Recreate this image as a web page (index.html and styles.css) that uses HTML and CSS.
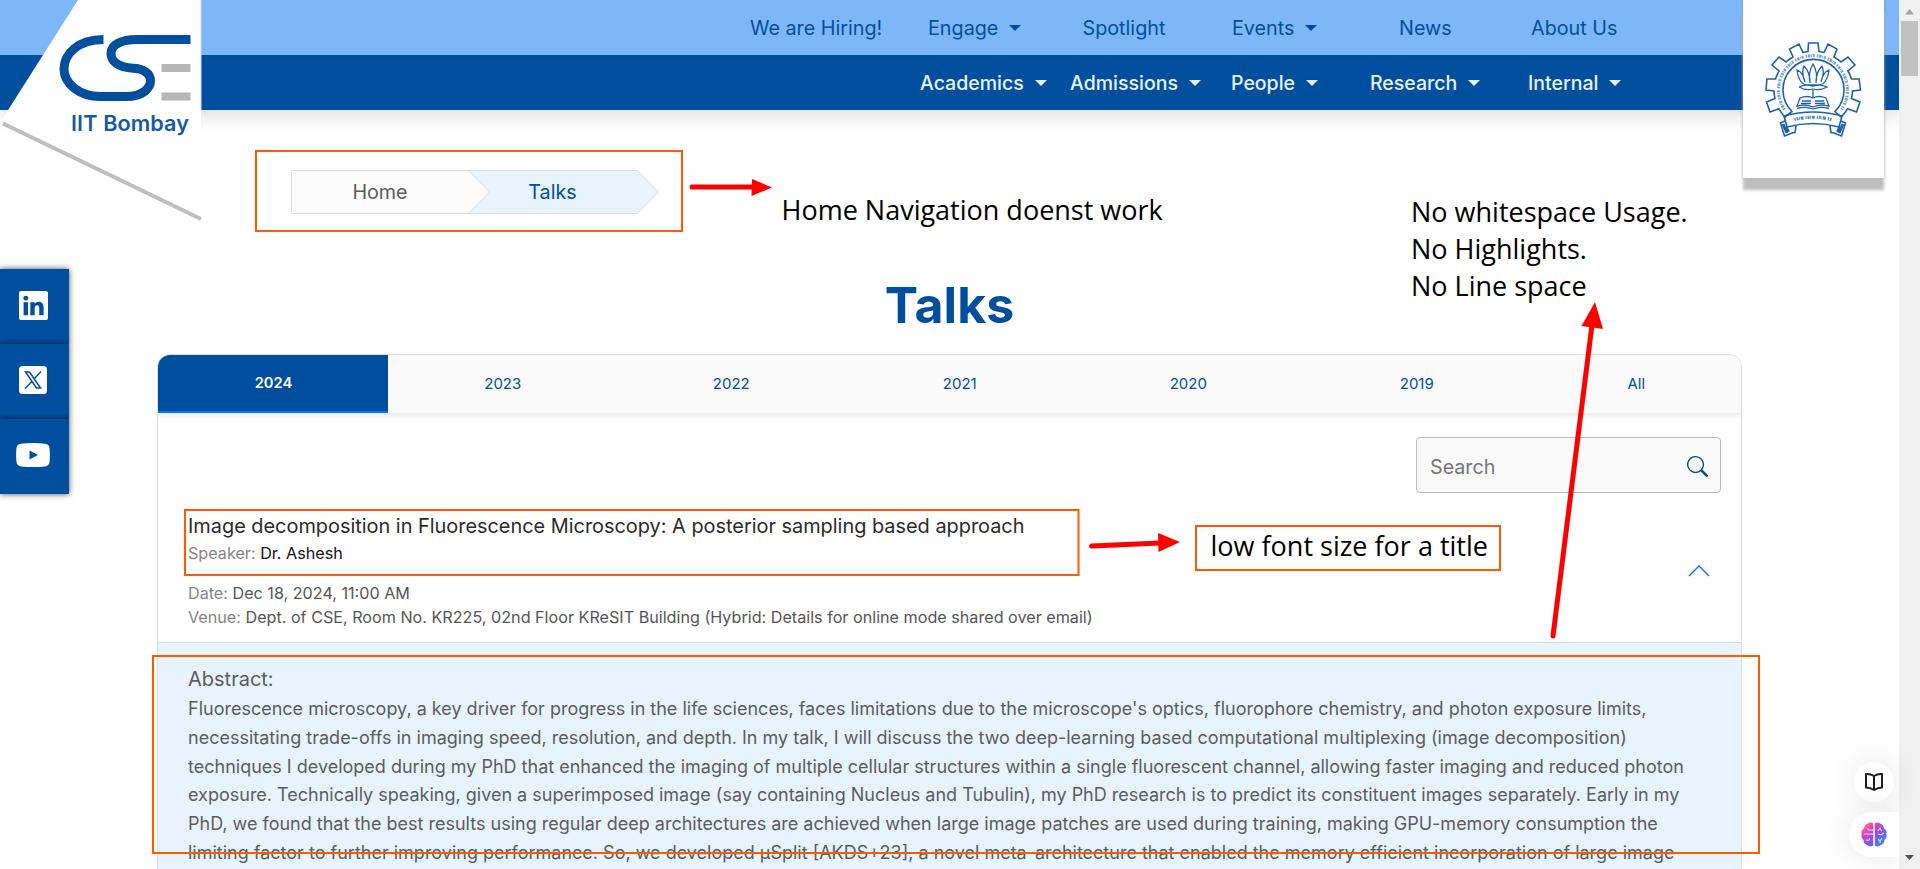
FILE: index.html
```html
<!DOCTYPE html>
<html lang="en">
<head>
<meta charset="utf-8">
<title>Talks | CSE IIT Bombay</title>
<link rel="stylesheet" href="styles.css">
</head>
<body>
<div class="viewport">
  <div class="page">
    <header class="header">
      <nav class="nav nav-top">
        <a>We are Hiring!</a><a class="drop">Engage</a><a>Spotlight</a><a class="drop">Events</a><a>News</a><a>About Us</a>
      </nav>
      <nav class="nav nav-main">
        <a class="drop">Academics</a><a class="drop">Admissions</a><a class="drop">People</a><a class="drop">Research</a><a class="drop">Internal</a>
      </nav>
    </header>

    <nav class="crumbs">
      <svg class="crumb-shape" width="369" height="45" viewBox="0 0 369 45">
        <path d="M177 .5H346.500L367.500 22L346.500 43.500H177z" fill="#e7f4fe" stroke="#dcdfe1"/>
        <path d="M.5 .5H177.500L198.500 22L177.500 43.500H.5z" fill="#fbfbfb" stroke="#dcdfe1"/>
      </svg>
      <a class="crumb">Home</a>
      <a class="crumb crumb-current">Talks</a>
    </nav>

    <h1 class="title">Talks</h1>

    <section class="card">
      <div class="tabs">
        <a class="tab active">2024</a><a class="tab">2023</a><a class="tab">2022</a><a class="tab">2021</a><a class="tab">2020</a><a class="tab">2019</a><a class="tab">All</a>
      </div>
      <div class="search-row">
        <div class="search">
          <span>Search</span>
          <svg width="21" height="21" viewBox="0 0 16 16" fill="#004f9e"><path d="M11.742 10.344a6.500 6.500 0 1 0-1.397 1.398h-.001q.044.060.098.115l3.850 3.850a1 1 0 0 0 1.415-1.414l-3.850-3.850a1 1 0 0 0-.115-.1zM12 6.500a5.500 5.500 0 1 1-11 0 5.500 5.500 0 0 1 11 0"/></svg>
        </div>
      </div>
      <article class="talk">
        <div class="talk-info">
          <div class="talk-title">Image decomposition in Fluorescence Microscopy: A posterior sampling based approach</div>
          <div class="meta speaker">Speaker: <b>Dr. Ashesh</b></div>
          <div class="meta">Date: <span>Dec 18, 2024, 11:00 AM</span></div>
          <div class="meta">Venue: <span>Dept. of CSE, Room No. KR225, 02nd Floor KReSIT Building (Hybrid: Details for online mode shared over email)</span></div>
        </div>
        <svg class="chevron" width="22" height="14" viewBox="0 0 22 14" fill="none" stroke="#0d6efd" stroke-width="1.400"><path d="M1 12L11 2L21 12"/></svg>
      </article>
      <div class="abstract">
        <div class="abstract-head">Abstract:</div>
        <div class="abstract-body">Fluorescence microscopy, a key driver for progress in the life sciences, faces limitations due to the microscope's optics, fluorophore chemistry, and photon exposure limits,<br>necessitating trade-offs in imaging speed, resolution, and depth. In my talk, I will discuss the two deep-learning based computational multiplexing (image decomposition)<br>techniques I developed during my PhD that enhanced the imaging of multiple cellular structures within a single fluorescent channel, allowing faster imaging and reduced photon<br>exposure. Technically speaking, given a superimposed image (say containing Nucleus and Tubulin), my PhD research is to predict its constituent images separately. Early in my<br>PhD, we found that the best results using regular deep architectures are achieved when large image patches are used during training, making GPU-memory consumption the<br>limiting factor to further improving performance. So, we developed µSplit [AKDS+23], a novel meta-architecture that enabled the memory efficient incorporation of large image</div>
      </div>
    </section>
  </div>

  <aside class="scrollbar">
    <svg width="21" height="21"><path d="M6 14.500L10.500 9L15 14.500z" fill="#a3a3a3"/></svg>
    <div class="thumb"></div>
    <svg class="scroll-down" width="21" height="21"><path d="M6 7L10.500 12L15 7z" fill="#505050"/></svg>
  </aside>
</div>

<svg class="logo-cse" width="206" height="226" viewBox="0 0 206 226">
  <path d="M78 0H201V219L3 122V118z" fill="#fff"/>
  <path d="M201 0V110" stroke="#c9dff5" stroke-width="1"/>
  <path d="M3 123.500L201 219" stroke="#bebebe" stroke-width="4"/>
  <g fill="none" stroke="#004f9e" stroke-width="9">
    <path d="M103.500 39.500C78 39.500 64 54 64 69C64 84 80 96.500 100 96.500H126C143 96.500 150.500 88 150.500 80.500C150.500 73 143 68.500 133 68.200C118 67.500 111 61 111 53.500C111 45 121 39.500 137 39.500H190.500"/>
  </g>
  <path d="M161.500 64H190.500V72H161.500zM161.500 92.500H190.500V100.500H161.500z" fill="#b6b6b6"/>
  <text x="71" y="130.500" class="logo-text" textLength="118">IIT Bombay</text>
</svg>

<div class="logo-iitb">
  <svg width="100" height="100" viewBox="-50 -50 100 100" fill="none" stroke="#1c62ab" stroke-width="1.600">
    <path d="M-28 27A39 39 0 0 1 -34 18.800L-43 22L-46.500 12L-38 8.500A39 39 0 0 1 -39 1L-47 0L-46 -11L-37.500 -11A39 39 0 0 1 -34 -19L-41 -25L-34 -33L-27 -28A39 39 0 0 1 -20 -33L-23.500 -41L-14 -46L-10 -37.500A39 39 0 0 1 -5 -38.500L-4.500 -47H5L6 -38.500A39 39 0 0 1 11 -37.500L15 -46L24 -41L21 -33A39 39 0 0 1 28 -28L35 -33L42 -25L35 -19A39 39 0 0 1 38.500 -11L46 -11L47.500 0L39.500 1A39 39 0 0 1 38.500 8.500L47 12L43.500 22L34.500 18.800A39 39 0 0 1 28 27L22 21.500A30.500 30.500 0 1 0 -21 21.500z"/>
    <path d="M-28.500 19.500A34.500 34.500 0 1 1 28.500 19.500" stroke-width="3" stroke-dasharray="1.500 .8 2.500 .8 .8 .8 2 2" opacity=".6"/>
    <path stroke-width="1.300" d="M-16 -20Q-14 -5 -5 -5H5Q14 -5 16 -20Q10 -18 8 -8Q12 -18 9 -24Q3 -18 3 -7Q5 -18 0 -26Q-5 -18 -3 -7Q-3 -18 -9 -24Q-12 -18 -8 -8Q-10 -18 -16 -20zM-14 -3Q-8 -6 0 -4Q8 -6 14 -3Q7 1 0 -1Q-7 1 -14 -3M0 0V8M-13 8Q-6 5 0 8Q6 5 13 8L16 16Q7 14 0 17Q-7 14 -16 16zM-16 18.500Q-7 16 0 19Q7 16 16 18.500M-11 11H-2M2 11H11M-12 13.500H-2M2 13.500H12"/>
    <path d="M-29 26Q0 18 29 26L26 37Q0 30 -26 37zM-28 31L-32.500 33L-28.500 46L-21 43L-18 42.500L-17 36M28 31L32.500 33L28.500 46L21 43L18 42.500L17 36"/>
    <path d="M-27 37L-24.500 42M27 37L24.500 42M-30 34L-26 43M30 34L26 43" stroke-width="3"/>
    <path d="M-18.500 29.500Q0 25 18.500 29.500" stroke-width="3.200" stroke-dasharray="1.200 .8 2 .7 .8 .7 3 2" opacity=".75"/>
  </svg>
</div>

<div class="social">
  <a><svg width="29" height="29" viewBox="0 0 16 16" fill="#fff"><path d="M0 1.146C0 .513.526 0 1.175 0h13.650C15.474 0 16 .513 16 1.146v13.708c0 .633-.526 1.146-1.175 1.146H1.175C.526 16 0 15.487 0 14.854zm4.943 12.248V6.169H2.542v7.225zm-1.200-8.212c.837 0 1.358-.554 1.358-1.248-.015-.709-.520-1.248-1.342-1.248S2.400 3.226 2.400 3.934c0 .694.521 1.248 1.327 1.248zm4.908 8.212V9.359c0-.216.016-.432.080-.586.173-.431.568-.878 1.232-.878.869 0 1.216.662 1.216 1.634v3.865h2.401V9.250c0-2.220-1.184-3.252-2.764-3.252-1.274 0-1.845.700-2.165 1.193v.025h-.016l.016-.025V6.169h-2.400c.030.678 0 7.225 0 7.225z"/></svg></a>
  <a><svg width="28" height="28" viewBox="0 0 28 28"><rect width="28" height="28" rx="3.500" fill="#fff"/><path d="M6.500 6H10.500L21.500 22H17.500zM22 5.500L15 13M13 15.500L6 22.500" fill="none" stroke="#004f9e" stroke-width="1.500"/></svg></a>
  <a><svg width="34" height="24" viewBox="0 0 34 24"><path d="M5 .7Q17 -.5 29 .7Q33 1 33.500 5Q34.300 12 33.500 19Q33 23 29 23.400Q17 24.500 5 23.400Q1 23 .5 19Q-.3 12 .5 5Q1 1 5 .7z" fill="#fff"/><path d="M13.500 7.500V16.500L22 12z" fill="#004f9e"/></svg></a>
</div>

<div class="fab fab-book">
  <svg width="20" height="20" viewBox="0 0 20 20" fill="none" stroke="#1d1d1f" stroke-width="2" stroke-linejoin="round"><path d="M10 4Q6 1.500 2 2V15.500Q6 15.500 10 18Q14 15.500 18 15.500V2Q14 1.500 10 4zV18"/></svg>
</div>
<div class="fab fab-brain">
  <svg width="26" height="25" viewBox="0 0 26 25">
    <defs><linearGradient id="g" x1="0" y1="0" x2="1" y2="1"><stop offset="0" stop-color="#ff9a2e"/><stop offset=".3" stop-color="#e83fc0"/><stop offset=".6" stop-color="#7a55f5"/><stop offset="1" stop-color="#18a8ff"/></linearGradient></defs>
    <path fill="url(#g)" d="M12.200 1.500V23.500Q9 25.500 6 23Q2.500 22 2.500 18Q-.5 16 .7 12Q-.5 8 3 6.500Q3.500 2.500 7 1.500Q10 -.5 12.200 1.500zM13.800 1.500V23.500Q17 25.500 20 23Q23.500 22 23.500 18Q26.500 16 25.300 12Q26.500 8 23 6.500Q22.500 2.500 19 1.500Q16 -.5 13.800 1.500z"/>
    <path fill="none" stroke="#fff" stroke-opacity=".8" stroke-width="1.100" d="M3 12H12M7 6V8H12M5 18Q9 19 8.500 16M17 9L19 6L20.500 9M17 12L20 13L23 11M17 17L19 19L21 16M19 19V21"/>
  </svg>
</div>

<svg class="marks" width="1920" height="869" viewBox="0 0 1920 869">
  <g fill="none" stroke="#ff5a00" stroke-width="2">
    <rect x="256" y="151" width="426" height="80"/>
    <rect x="185" y="510" width="893.500" height="65"/>
    <rect x="1196" y="526" width="304" height="44"/>
    <rect x="153" y="656" width="1606" height="197"/>
  </g>
  <g stroke="#f00" stroke-width="5" stroke-linecap="round">
    <path d="M692 187H755M1091.500 546L1160 543M1553 636L1592 325"/>
  </g>
  <path d="M752 179L772 187.500L751.500 196zM1158 533L1180 542L1158.500 552zM1595 302L1581.500 326L1603 329z" fill="#f00"/>
</svg>
<div class="note note-home">Home Navigation doenst work</div>
<div class="note note-space">No whitespace Usage.<br>No Highlights.<br>No Line space</div>
<div class="note note-title">low font size for a title</div>
</body>
</html>
```
FILE: styles.css
```css
* { box-sizing: border-box; }
body { margin: 0; height: 869px; overflow: hidden; position: relative; font-family: Inter, sans-serif; background: #fff; color: #5c5c5c; }
.viewport { display: flex; height: 869px; overflow: hidden; }
.page { width: 1899px; overflow: hidden; }

.header { box-shadow: 0 4px 20px rgba(0, 0, 0, .16); }
.nav { display: grid; height: 55px; align-items: center; font-size: 19.5px; white-space: nowrap; }
.nav-top { padding-left: 750px; grid-template-columns: 178px 154.5px 149.5px 167px 132px auto; background: #7db7f7; color: #004f9e; font-size: 19.75px; }
.nav-main { padding-left: 920px; grid-template-columns: 150px 161px 139px 158px auto; background: #004f9e; color: #e7f4fe; font-weight: 500; }
.drop::after { content: ""; display: inline-block; margin-left: 11px; vertical-align: 4px; border: 6px solid transparent; border-top-color: currentColor; border-bottom: 0; }

.crumbs { position: relative; display: flex; align-items: center; width: 369px; height: 45px; margin: 60px 0 0 291px; padding-bottom: 2px; font-size: 19.7px; }
.crumb-shape { position: absolute; left: 0; top: 0; }
.crumb { position: relative; width: 178px; text-align: center; }
.crumb-current { width: 167px; color: #004f9e; }

.title { margin: 60px 0 0; height: 79px; line-height: 60px; text-align: center; font-size: 50px; font-weight: 700; color: #004f9e; }

.card { margin: 0 157px; border: 1px solid #dcdfe1; border-radius: 13px 13px 0 0; height: 600px; overflow: hidden; }
.tabs { display: grid; grid-template-columns: 230px repeat(5, 228.5px) 1fr; height: 58px; background: #fafafa; font-size: 15px; box-shadow: 0 2px 5px rgba(0, 0, 0, .1); }
.tab { display: flex; align-items: center; justify-content: center; padding: 0 0 2px 1px; color: #004f9e; }
.tab.active { background: #004f9e; color: #fff; font-weight: 600; font-size: 14.7px; padding-bottom: 0; border-bottom: 2px solid #0d6efd; }
.search-row { display: flex; justify-content: flex-end; padding: 24px 20px 0 0; }
.search { display: flex; align-items: center; justify-content: space-between; width: 305px; height: 56px; padding: 3px 12px 0 13px; border: 1px solid #bbb; border-radius: 4px; background: #fafafa; font-size: 19.7px; color: #757575; }
.talk { display: flex; justify-content: space-between; align-items: center; height: 150px; padding: 0 31px 0 30px; border-bottom: 1px solid #d9dcde; }
.talk-info { padding-top: 4px; }
.talk-title { font-size: 19.9px; line-height: 30px; color: #2b2b2b; }
.meta { font-size: 16.17px; line-height: 24px; color: #858585; }
.meta span { color: #555; }
.meta b { color: #111; font-weight: 400; }
.speaker { margin-bottom: 16px; }
.chevron { margin-top: 7px; }
.abstract { background: #e7f4fe; padding: 20px 0 0 30px; height: 400px; }
.abstract-head { font-size: 20px; line-height: 32px; }
.abstract-body { font-size: 18px; line-height: 28.8px; white-space: nowrap; }

.scrollbar { width: 21px; background: #f0f0f0; display: flex; flex-direction: column; align-items: center; }
.thumb { width: 17px; height: 55px; background: #c1c1c1; }
.scroll-down { margin-top: auto; }

.logo-cse { position: absolute; left: 0; top: 0; }
.logo-text { font: 600 21.6px Inter, sans-serif; fill: #1559a6; }
.logo-iitb { position: absolute; left: 1743px; top: 0; width: 141px; height: 178px; padding: 40px 0 0 20px; background: #fff; box-shadow: 0 12px 3px #bdbdbd, 0 0 3px rgba(0, 0, 0, .2); }

.social { position: absolute; left: 0; top: 269px; width: 69px; }
.social a { display: flex; align-items: center; height: 75px; padding: 0 0 3px 19px; background: #004f9e; box-shadow: 0 0 6px rgba(0, 0, 0, .7); }
.social a:last-child { padding-left: 16px; }

.fab { position: absolute; display: flex; align-items: center; background: #fff; box-shadow: 0 0 30px rgba(0, 0, 0, .1); }
.fab-book { left: 1854px; top: 762px; width: 40px; height: 40px; border-radius: 20px; justify-content: center; }
.fab-brain { left: 1849px; top: 812px; width: 50px; height: 45px; border-radius: 23px 0 0 23px; padding-left: 12px; clip-path: inset(-40px 0 -40px -40px); }

.marks { position: absolute; left: 0; top: 0; }
.note { position: absolute; font: 27px/37px "Open Sans", sans-serif; color: #000; white-space: nowrap; }
.note-home { left: 781.5px; top: 191px; }
.note-space { left: 1411px; top: 193px; }
.note-title { left: 1210.5px; top: 527px; }
```
